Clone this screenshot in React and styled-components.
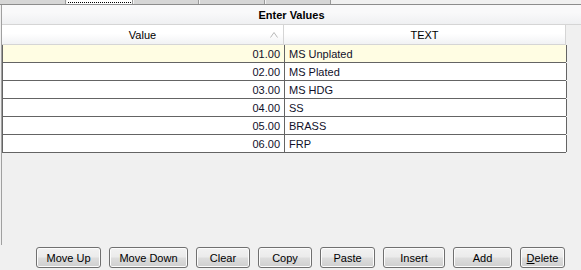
import React from "react";
import styled, { createGlobalStyle } from "styled-components";

const Global = createGlobalStyle`
  html, body { margin: 0; padding: 0; }
  body {
    width: 581px; height: 270px; overflow: hidden;
    background: #f0f0f0;
    font-family: "Liberation Sans", Arial, sans-serif;
    font-size: 11px;
    color: #000;
  }
`;

const Root = styled.div`
  width: 581px;
  height: 270px;
  display: flex;
  flex-direction: column;
  background: #f0f0f0;
`;

const TabStrip = styled.div`
  height: 5px;
  display: flex;
  align-items: stretch;
  border-bottom: 1px solid #8c8c8c;
  box-sizing: border-box;
`;

const Tab = styled.div`
  width: ${(p) => p.$w}px;
  box-sizing: border-box;
  background: ${(p) => (p.$active ? "#ffffff" : "#d6d6d6")};
  border-right: 1px solid #9a9a9a;
  border-left: ${(p) => (p.$first ? "none" : "1px solid #f4f4f4")};
  position: relative;
  &::after {
    content: "";
    display: ${(p) => (p.$active ? "block" : "none")};
    position: absolute;
    left: 1px; right: 1px; bottom: 1px;
    border-bottom: 1px dotted #000;
  }
`;

const Panel = styled.div`
  flex: 1;
  display: flex;
  flex-direction: column;
  border-left: 1px solid #a0a0a0;
  margin-left: 1px;
`;

const TitleBar = styled.div`
  height: 20px;
  box-sizing: border-box;
  display: flex;
  align-items: center;
  justify-content: center;
  font-weight: bold;
  background: linear-gradient(#f9f9fa, #f9f9fa 40%, #eff0f2);
  border-bottom: 1px solid #d5d5d5;
  padding-top: 1px;
`;

const Grid = styled.div`
  width: 564px;
  display: flex;
  flex-direction: column;
`;

const HeaderRow = styled.div`
  height: 20px;
  box-sizing: border-box;
  display: grid;
  grid-template-columns: 282px 282px;
  background: linear-gradient(#ffffff, #ffffff 45%, #f1f2f4);
  border-bottom: 1px solid #d5d5d5;
`;

const HeaderCell = styled.div`
  position: relative;
  display: flex;
  align-items: center;
  justify-content: center;
  border-right: 1px solid #d5d5d5;
  padding-top: 1px;
`;

const SortGlyph = styled.svg`
  position: absolute;
  right: 5px;
  top: 7px;
`;

const Row = styled.div`
  height: 18px;
  box-sizing: border-box;
  display: grid;
  grid-template-columns: 282px 282px;
  background: ${(p) => (p.$current ? "#fffde3" : "#ffffff")};
  border-bottom: 1px solid #646464;
  border-left: 1px solid #646464;
`;

const Cell = styled.div`
  display: flex;
  align-items: center;
  justify-content: ${(p) => (p.$right ? "flex-end" : "flex-start")};
  padding: ${(p) => (p.$right ? "0 4px 0 0" : "0 0 0 4px")};
  border-right: 1px solid #646464;
  white-space: nowrap;
  color: #10102a;
`;

const ButtonBar = styled.div`
  height: 25px;
  display: flex;
  justify-content: flex-end;
  align-items: flex-start;
  gap: 8px;
  padding: 2px 16px 0 0;
  box-sizing: border-box;
`;

const Button = styled.button`
  width: ${(p) => p.$w}px;
  height: 21px;
  box-sizing: border-box;
  border: 1px solid #707070;
  border-radius: 3px;
  background: linear-gradient(#f2f2f2, #ebebeb 48%, #dddddd 52%, #cfcfcf);
  box-shadow: inset 0 0 0 1px #fcfcfc;
  font-family: "Liberation Sans", Arial, sans-serif;
  font-size: 11px;
  color: #000;
  padding: 0;
  display: flex;
  align-items: center;
  justify-content: center;
  u { text-decoration: underline; }
`;

const rows = [
  ["01.00", "MS Unplated"],
  ["02.00", "MS Plated"],
  ["03.00", "MS HDG"],
  ["04.00", "SS"],
  ["05.00", "BRASS"],
  ["06.00", "FRP"],
];

const buttons = [
  ["Move Up", 65],
  ["Move Down", 79],
  ["Clear", 54],
  ["Copy", 54],
  ["Paste", 55],
  ["Insert", 62],
  ["Add", 59],
];

export default function App() {
  return (
    <Root>
      <Global />
      <TabStrip>
        <Tab $w={66} $first />
        <Tab $w={67} $active />
        <Tab $w={66} />
        <Tab $w={66} />
        <Tab $w={66} />
      </TabStrip>
      <Panel>
        <TitleBar>Enter Values</TitleBar>
        <Grid>
          <HeaderRow>
            <HeaderCell>
              Value
              <SortGlyph width="8" height="6" viewBox="0 0 8 6">
                <path d="M0.5 5.5 L4 0.5 L7.5 5.5" fill="none" stroke="#b8b8b8" strokeWidth="1" />
              </SortGlyph>
            </HeaderCell>
            <HeaderCell>TEXT</HeaderCell>
          </HeaderRow>
          {rows.map(([v, t], i) => (
            <Row key={v} $current={i === 0}>
              <Cell $right>{v}</Cell>
              <Cell>{t}</Cell>
            </Row>
          ))}
        </Grid>
      </Panel>
      <ButtonBar>
        {buttons.map(([label, w]) => (
          <Button key={label} $w={w}>{label}</Button>
        ))}
        <Button $w={45}>
          <span><u>D</u>elete</span>
        </Button>
      </ButtonBar>
    </Root>
  );
}
